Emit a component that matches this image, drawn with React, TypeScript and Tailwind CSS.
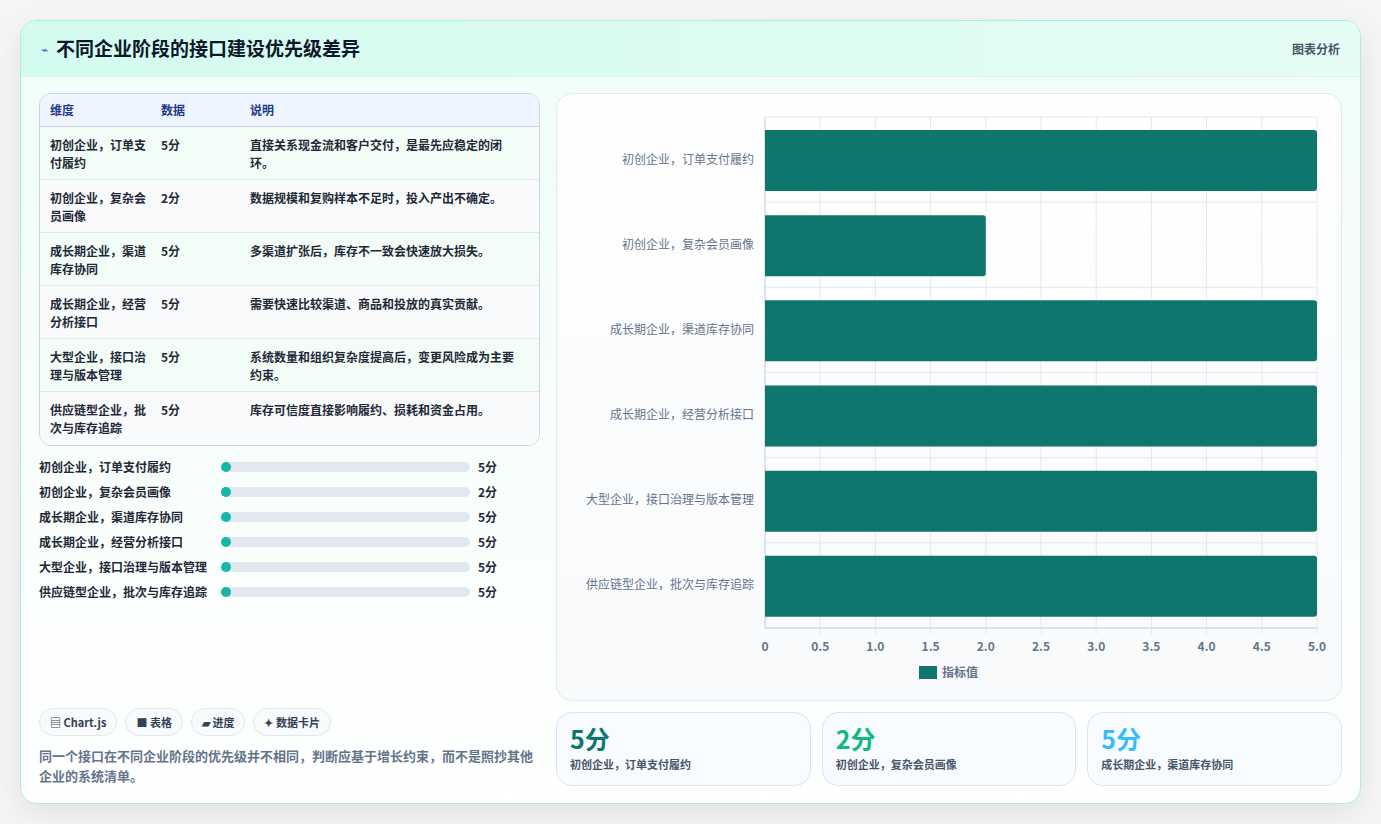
import React from "react";

const rows = [
  ["初创企业，订单支付履约", "5分", "直接关系现金流和客户交付，是最先应稳定的闭环。", 5],
  ["初创企业，复杂会员画像", "2分", "数据规模和复购样本不足时，投入产出不确定。", 2],
  ["成长期企业，渠道库存协同", "5分", "多渠道扩张后，库存不一致会快速放大损失。", 5],
  ["成长期企业，经营分析接口", "5分", "需要快速比较渠道、商品和投放的真实贡献。", 5],
  ["大型企业，接口治理与版本管理", "5分", "系统数量和组织复杂度提高后，变更风险成为主要约束。", 5],
  ["供应链型企业，批次与库存追踪", "5分", "库存可信度直接影响履约、损耗和资金占用。", 5],
] as const;

const tableLabels = [
  ["初创企业，订单支", "付履约"],
  ["初创企业，复杂会", "员画像"],
  ["成长期企业，渠道", "库存协同"],
  ["成长期企业，经营", "分析接口"],
  ["大型企业，接口治", "理与版本管理"],
  ["供应链型企业，批", "次与库存追踪"],
];

function Chart() {
  const x0 = 208, x1 = 760, y0 = 23, y1 = 534;
  const band = (y1 - y0) / 6;
  const ticks = ["0", "0.5", "1.0", "1.5", "2.0", "2.5", "3.0", "3.5", "4.0", "4.5", "5.0"];
  return (
    <svg width="784" height="608" className="block">
      {ticks.map((t, i) => {
        const x = x0 + ((x1 - x0) * i) / 10;
        return (
          <g key={t}>
            <line x1={x} y1={y0} x2={x} y2={y1 + (i === 0 ? 0 : 6)} stroke="#e5e7eb" />
            <text x={x} y={557} textAnchor="middle" fontSize="12" fill="#64748b" fontWeight="600">{t}</text>
          </g>
        );
      })}
      {Array.from({ length: 7 }).map((_, i) => (
        <line key={i} x1={x0 - (i === 6 ? 0 : 0)} y1={y0 + band * i} x2={x1} y2={y0 + band * i} stroke="#e5e7eb" />
      ))}
      <line x1={x0} y1={y0} x2={x0} y2={y1} stroke="#cbd5e1" />
      <line x1={x0} y1={y1} x2={x1} y2={y1} stroke="#cbd5e1" />
      {rows.map((r, i) => {
        const top = y0 + band * i + 13;
        const w = ((x1 - x0) * r[3]) / 5;
        return (
          <g key={i}>
            <path d={`M${x0} ${top} H${x0 + w - 3} Q${x0 + w} ${top} ${x0 + w} ${top + 3} V${top + 58} Q${x0 + w} ${top + 61} ${x0 + w - 3} ${top + 61} H${x0} Z`} fill="#0f766e" />
            <text x={197} y={y0 + band * i + band / 2 + 4} textAnchor="end" fontSize="12" fill="#64748b">{r[0]}</text>
          </g>
        );
      })}
      <rect x={362} y={572} width={18} height={13} fill="#0f766e" />
      <text x={385} y={583} fontSize="12" fill="#64748b" fontWeight="600">指标值</text>
    </svg>
  );
}

export default function App() {
  return (
    <div className="w-[1381px] h-[824px] bg-[#f5f5f5] p-5" style={{ fontFamily: '"Noto Sans CJK SC", "Noto Sans", sans-serif' }}>
      <div className="w-[1341px] h-[784px] rounded-2xl border border-[#a7f0da] bg-gradient-to-b from-[#effdf8] to-white shadow-[0_10px_30px_rgba(0,0,0,0.08)] overflow-hidden flex flex-col">
        <div className="h-[56px] shrink-0 flex items-center justify-between px-5 bg-gradient-to-r from-[#d3fbef] to-[#e5fdf5] border-b border-[#d5f5ea]">
          <div className="flex items-center gap-2">
            <span className="text-[#2563eb] text-xs">⌁</span>
            <span className="text-[19px] font-bold text-[#0f172a]">不同企业阶段的接口建设优先级差异</span>
          </div>
          <span className="text-xs font-semibold text-[#475569]">图表分析</span>
        </div>
        <div className="flex gap-4 px-[18px] pt-4 flex-1">
          <div className="w-[502px] flex flex-col">
            <div className="rounded-xl border border-[#cbd5e1] overflow-hidden bg-white text-xs font-semibold">
              <div className="flex h-[33px] items-center bg-[#eef5ff] text-[#1e3a8a] border-b border-[#cbd5e1]">
                <div className="w-[121px] pl-[10px]">维度</div>
                <div className="w-[89px]">数据</div>
                <div>说明</div>
              </div>
              {rows.map((r, i) => (
                <div key={i} className={`flex h-[53px] pt-[9px] leading-[18px] text-[#1f2937] ${i < 5 ? "border-b border-[#e2e8f0]" : ""} ${i % 2 === 0 ? "bg-[#f3fdf8]" : "bg-[#f8fafc]"}`}>
                  <div className="w-[121px] pl-[10px]">{tableLabels[i][0]}<br />{tableLabels[i][1]}</div>
                  <div className="w-[89px]">{r[1]}</div>
                  <div className="w-[270px]">{r[2]}</div>
                </div>
              ))}
            </div>
            <div className="mt-[12px] flex flex-col gap-[7px]">
              {rows.map((r, i) => (
                <div key={i} className="flex items-center h-[18px] text-xs font-semibold text-[#1f2937]">
                  <div className="w-[182px] whitespace-nowrap">{r[0]}</div>
                  <div className="w-[249px] h-[10px] rounded-full bg-[#e2e8f0] relative">
                    <div className="absolute left-0 top-0 w-[10px] h-[10px] rounded-full bg-[#14b8a6]" />
                  </div>
                  <div className="ml-2">{r[1]}</div>
                </div>
              ))}
            </div>
            <div className="mt-auto mb-[17px]">
              <div className="flex gap-2 text-[11px] font-semibold text-[#334155]">
                <span className="h-[28px] px-[10px] flex items-center rounded-full border border-[#e2e8f0] bg-[#f8fafc]">▤ Chart.js</span>
                <span className="h-[28px] px-[10px] flex items-center rounded-full border border-[#e2e8f0] bg-[#f8fafc]">■ 表格</span>
                <span className="h-[28px] px-[10px] flex items-center rounded-full border border-[#e2e8f0] bg-[#f8fafc]">▰ 进度</span>
                <span className="h-[28px] px-[10px] flex items-center rounded-full border border-[#e2e8f0] bg-[#f8fafc]">✦ 数据卡片</span>
              </div>
              <p className="mt-[10px] text-[13px] leading-[20px] font-semibold text-[#64748b]">同一个接口在不同企业阶段的优先级并不相同，判断应基于增长约束，而不是照抄其他企业的系统清单。</p>
            </div>
          </div>
          <div className="flex-1 flex flex-col">
            <div className="h-[608px] rounded-2xl border border-[#e2e8f0] bg-gradient-to-b from-white to-[#f8fafc]">
              <Chart />
            </div>
            <div className="mt-[11px] grid grid-cols-3 gap-[11px]">
              {[["5分", "text-[#0f766e]", rows[0][0]], ["2分", "text-[#10b981]", rows[1][0]], ["5分", "text-[#38bdf8]", rows[2][0]]].map((c, i) => (
                <div key={i} className="h-[74px] rounded-2xl border border-[#dbe5f0] bg-[#f8fbff] px-[13px] pt-[8px]">
                  <div className={`text-[25px] font-bold leading-[34px] ${c[1]}`}>{c[0]}</div>
                  <div className="text-[11px] font-semibold text-[#475569] mt-[1px]">{c[2]}</div>
                </div>
              ))}
            </div>
          </div>
        </div>
      </div>
    </div>
  );
}
